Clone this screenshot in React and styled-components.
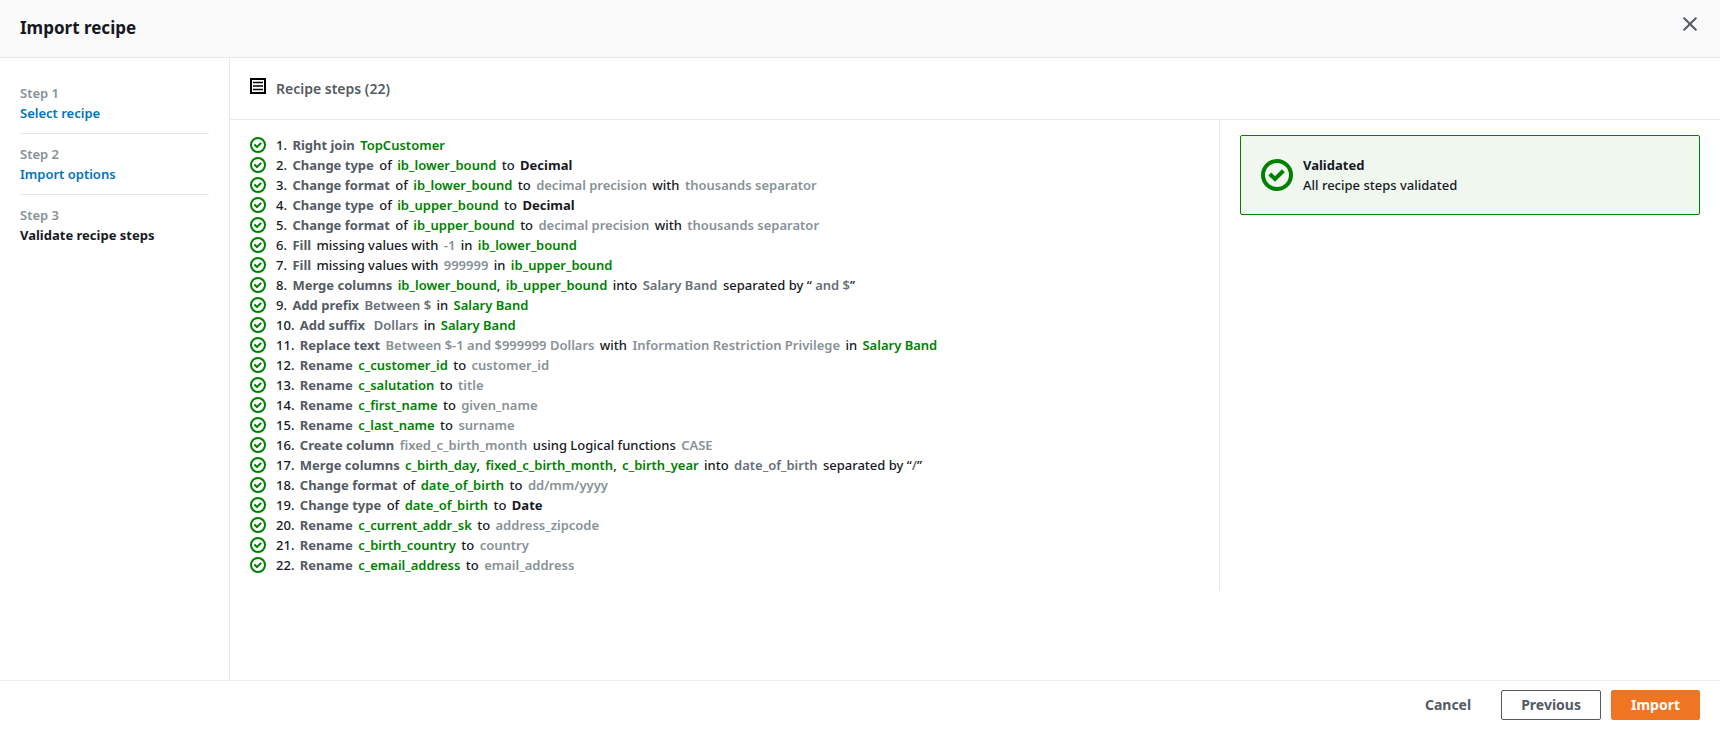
import React from 'react';
import styled, { createGlobalStyle, css } from 'styled-components';

const color = {
  text: '#16191f',
  action: '#545b64',
  dim: '#687078',
  muted: '#879196',
  green: '#008000',
  link: '#0073bb',
  line: '#eaeded',
  rule: '#e8e9ea',
  orange: '#f07523',
};

const GlobalStyle = createGlobalStyle`
  *, *::before, *::after { box-sizing: border-box; }
  body {
    margin: 0;
    background: #fff;
    color: ${color.text};
    font-family: 'Noto Sans', 'Open Sans', sans-serif;
    font-size: 13px;
    font-weight: 500;
    line-height: 20px;
  }
`;

const Page = styled.div`
  min-height: 100vh;
  display: flex;
  flex-direction: column;
`;

const Header = styled.header`
  display: flex;
  align-items: flex-start;
  justify-content: space-between;
  padding: 14px 20px 15px;
  background: #fafafa;
  border-bottom: 1px solid ${color.rule};
`;

const Title = styled.h1`
  margin: 0;
  font-size: 17px;
  line-height: 28px;
  font-weight: 700;
`;

const CloseButton = styled.button`
  display: flex;
  align-items: center;
  justify-content: center;
  width: 20px;
  height: 20px;
  padding: 0;
  border: 0;
  background: none;
  color: ${color.action};
  cursor: pointer;
`;

const Body = styled.div`
  flex: 1;
  display: flex;
`;

const Sidebar = styled.nav`
  flex: 0 0 230px;
  padding: 15px 20px;
  border-right: 1px solid ${color.rule};
`;

const StepList = styled.ol`
  margin: 0;
  padding: 0;
  list-style: none;
`;

const StepItem = styled.li`
  padding: 10px 0;
  & + & {
    border-top: 1px solid ${color.rule};
  }
`;

const StepNumber = styled.div`
  color: ${color.muted};
  font-weight: 600;
`;

const StepLink = styled.a`
  color: ${color.link};
  font-weight: 600;
  text-decoration: none;
`;

const StepCurrent = styled.span`
  font-weight: 700;
`;

const Main = styled.main`
  flex: 1;
  min-width: 0;
`;

const PanelHeader = styled.div`
  display: flex;
  align-items: flex-start;
  gap: 10px;
  padding: 20px 20px 19px;
  border-bottom: 1px solid ${color.rule};
`;

const PanelTitle = styled.h2`
  margin: 0;
  color: ${color.action};
  font-size: 14px;
  line-height: 22px;
  font-weight: 600;
`;

const Columns = styled.div`
  display: flex;
  align-items: stretch;
`;

const RecipeList = styled.ul`
  flex: 1;
  min-width: 0;
  margin: 0;
  padding: 15px 20px;
  list-style: none;
`;

const RecipeRow = styled.li`
  display: flex;
  align-items: flex-start;
  gap: 10px;
`;

const IconSlot = styled.span`
  flex: none;
  display: flex;
  align-items: center;
  height: 20px;
`;

const kinds = {
  plain: css``,
  action: css`color: ${color.action}; font-weight: 700;`,
  column: css`color: ${color.green}; font-weight: 600;`,
  value: css`color: ${color.muted}; font-weight: 600;`,
  target: css`color: ${color.dim}; font-weight: 600;`,
  type: css`font-weight: 700;`,
};

const Part = styled.span`
  white-space: pre-wrap;
  margin-right: ${(p) => (p.$tight ? '0' : '2px')};
  ${(p) => kinds[p.$kind]}
`;

const Aside = styled.aside`
  flex: 0 0 501px;
  padding: 15px 20px;
  border-left: 1px solid ${color.rule};
`;

const Alert = styled.div`
  display: flex;
  align-items: center;
  gap: 10px;
  padding: 19px 20px;
  border: 1px solid ${color.green};
  border-radius: 2px;
  background: #f0f7ef;
`;

const AlertTitle = styled.div`
  font-weight: 700;
`;

const Footer = styled.footer`
  display: flex;
  justify-content: flex-end;
  gap: 10px;
  padding: 9px 20px 10px;
  border-top: 1px solid ${color.line};
`;

const variants = {
  link: css`color: ${color.action}; background: none; border-color: transparent;`,
  normal: css`color: ${color.action}; background: #fff; border-color: ${color.action};`,
  primary: css`color: #fff; background: ${color.orange}; border-color: ${color.orange};`,
};

const Button = styled.button`
  height: 30px;
  padding: 0 19px;
  border: 1px solid;
  border-radius: 2px;
  font: inherit;
  font-size: 14px;
  font-weight: 700;
  cursor: pointer;
  ${(p) => variants[p.$variant]}
`;

const CheckIcon = ({ size }) => (
  <svg width={size} height={size} viewBox="0 0 16 16" fill="none" stroke={color.green} strokeWidth="2" aria-hidden="true">
    <circle cx="8" cy="8" r="7" />
    <path d="M4.4 7.5 7 10 11.2 5.9" />
  </svg>
);

const ListIcon = () => (
  <svg width="16" height="16" viewBox="0 0 16 16" fill="none" stroke="#000" aria-hidden="true">
    <path d="M1 1h14v14H1z" strokeWidth="2" />
    <path d="M3 4.5h10M3 8h10M3 11.5h10" strokeWidth="1.5" />
  </svg>
);

const CloseIcon = () => (
  <svg width="14" height="14" viewBox="0 0 14 14" fill="none" stroke="currentColor" strokeWidth="2" strokeLinecap="round" aria-hidden="true">
    <path d="M1.2 1.2 12.8 12.8M12.8 1.2 1.2 12.8" />
  </svg>
);

const act = (t) => ['action', t];
const col = (t, tight) => ['column', t, tight];
const val = (t) => ['value', t];
const tgt = (t, tight) => ['target', t, tight];
const typ = (t) => ['type', t];
const txt = (t, tight) => ['plain', t, tight];

const changeType = (c, t) => [act('Change type'), txt('of'), col(c), txt('to'), typ(t)];
const changeFormat = (c, ...rest) => [act('Change format'), txt('of'), col(c), txt('to'), ...rest];
const rename = (from, to) => [act('Rename'), col(from), txt('to'), val(to)];

const recipe = [
  [act('Right join'), col('TopCustomer')],
  changeType('ib_lower_bound', 'Decimal'),
  changeFormat('ib_lower_bound', val('decimal precision'), txt('with'), val('thousands separator')),
  changeType('ib_upper_bound', 'Decimal'),
  changeFormat('ib_upper_bound', val('decimal precision'), txt('with'), val('thousands separator')),
  [act('Fill'), txt('missing values with'), val('-1'), txt('in'), col('ib_lower_bound')],
  [act('Fill'), txt('missing values with'), val('999999'), txt('in'), col('ib_upper_bound')],
  [act('Merge columns'), col('ib_lower_bound', true), txt(','), col('ib_upper_bound'), txt('into'), tgt('Salary Band'), txt('separated by “', true), tgt(' and $', true), txt('”')],
  [act('Add prefix'), tgt('Between $'), txt('in'), col('Salary Band')],
  [act('Add suffix'), tgt(' Dollars'), txt('in'), col('Salary Band')],
  [act('Replace text'), val('Between $-1 and $999999 Dollars'), txt('with'), val('Information Restriction Privilege'), txt('in'), col('Salary Band')],
  rename('c_customer_id', 'customer_id'),
  rename('c_salutation', 'title'),
  rename('c_first_name', 'given_name'),
  rename('c_last_name', 'surname'),
  [act('Create column'), val('fixed_c_birth_month'), txt('using Logical functions'), val('CASE')],
  [act('Merge columns'), col('c_birth_day', true), txt(','), col('fixed_c_birth_month', true), txt(','), col('c_birth_year'), txt('into'), tgt('date_of_birth'), txt('separated by “', true), tgt('/', true), txt('”')],
  changeFormat('date_of_birth', val('dd/mm/yyyy')),
  changeType('date_of_birth', 'Date'),
  rename('c_current_addr_sk', 'address_zipcode'),
  rename('c_birth_country', 'country'),
  rename('c_email_address', 'email_address'),
];

export default function App() {
  return (
    <Page>
      <GlobalStyle />
      <Header>
        <Title>Import recipe</Title>
        <CloseButton type="button" aria-label="Close"><CloseIcon /></CloseButton>
      </Header>
      <Body>
        <Sidebar aria-label="Import steps">
          <StepList>
            <StepItem>
              <StepNumber>Step 1</StepNumber>
              <StepLink href="#select-recipe">Select recipe</StepLink>
            </StepItem>
            <StepItem>
              <StepNumber>Step 2</StepNumber>
              <StepLink href="#import-options">Import options</StepLink>
            </StepItem>
            <StepItem>
              <StepNumber>Step 3</StepNumber>
              <StepCurrent aria-current="step">Validate recipe steps</StepCurrent>
            </StepItem>
          </StepList>
        </Sidebar>
        <Main>
          <PanelHeader>
            <ListIcon />
            <PanelTitle>Recipe steps ({recipe.length})</PanelTitle>
          </PanelHeader>
          <Columns>
            <RecipeList>
              {recipe.map((parts, i) => (
                <RecipeRow key={i}>
                  <IconSlot><CheckIcon size={16} /></IconSlot>
                  <div>
                    <Part $kind="plain">{i + 1}.</Part>{' '}
                    {parts.map(([kind, text, tight], j) => (
                      <React.Fragment key={j}>
                        <Part $kind={kind} $tight={tight}>{text}</Part>
                        {tight ? '' : ' '}
                      </React.Fragment>
                    ))}
                  </div>
                </RecipeRow>
              ))}
            </RecipeList>
            <Aside>
              <Alert role="status">
                <CheckIcon size={32} />
                <div>
                  <AlertTitle>Validated</AlertTitle>
                  <div>All recipe steps validated</div>
                </div>
              </Alert>
            </Aside>
          </Columns>
        </Main>
      </Body>
      <Footer>
        <Button type="button" $variant="link">Cancel</Button>
        <Button type="button" $variant="normal">Previous</Button>
        <Button type="button" $variant="primary">Import</Button>
      </Footer>
    </Page>
  );
}
